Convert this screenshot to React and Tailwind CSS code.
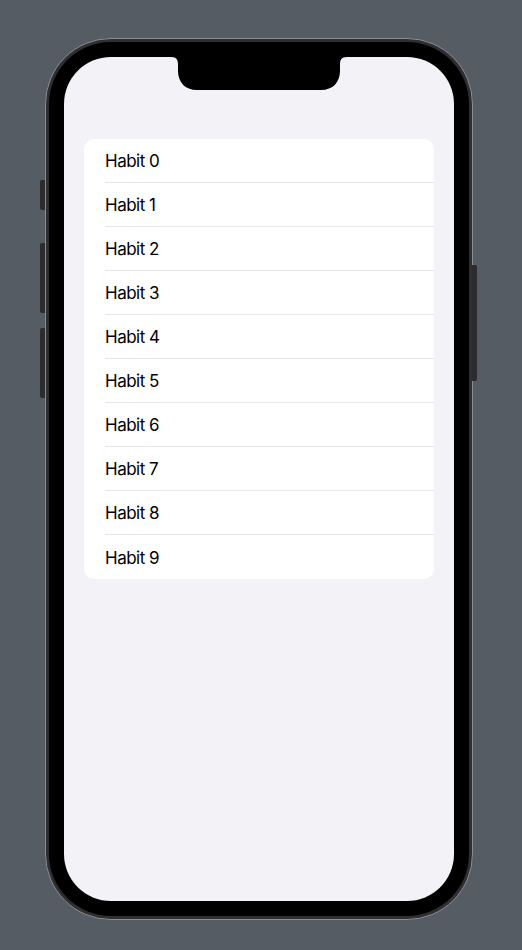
import React from 'react';

const habits = Array.from({ length: 10 }, (_, i) => `Habit ${i}`);

const Notch = () => (
  <svg
    className="absolute left-1/2 top-0 -translate-x-1/2"
    width="176"
    height="34"
    viewBox="0 0 176 34"
  >
    <path
      d="M0 0 H176 C170 0 169 3 169 8 V14 C169 25 162 33 150 33 H26 C14 33 7 25 7 14 V8 C7 3 6 0 0 0 Z"
      fill="#000"
    />
  </svg>
);

const App = () => {
  return (
    <div
      className="flex h-[950px] w-full justify-center bg-[#555c64] pt-[38px]"
      style={{ fontFamily: 'Inter, "Noto Sans", sans-serif' }}
    >
      {/* Phone frame */}
      <div className="relative ml-[-4px] h-[882px] w-[428px]">
        {/* side buttons */}
        <div className="absolute left-[-5px] top-[142px] h-[30px] w-[5px] rounded-l-[2px] bg-[#2c2c2e]" />
        <div className="absolute left-[-5px] top-[205px] h-[70px] w-[5px] rounded-l-[2px] bg-[#2c2c2e]" />
        <div className="absolute left-[-5px] top-[290px] h-[70px] w-[5px] rounded-l-[2px] bg-[#2c2c2e]" />
        <div className="absolute right-[-4px] top-[227px] h-[116px] w-[5px] rounded-r-[2px] bg-[#2c2c2e]" />

        <div className="h-full w-full rounded-[66px] border border-[#8a8d91] bg-[#2f2f31] p-[3px]">
          <div className="h-full w-full rounded-[62px] bg-black p-[15px]">
            {/* Screen */}
            <div className="relative h-[844px] w-[390px] overflow-hidden rounded-[47px] bg-[#f2f2f7]">
              <Notch />
              <div className="px-5 pt-[82px]">
                <div className="overflow-hidden rounded-[10px] bg-white">
                  {habits.map((h, i) => (
                    <div key={h} className="pl-[21px]">
                      <div
                        className={`flex h-[44px] items-center pt-[3px] text-[17px] tracking-[-0.5px] text-black ${
                          i < habits.length - 1 ? 'border-b border-[#e6e6ea]' : ''
                        }`}
                      >
                        {h}
                      </div>
                    </div>
                  ))}
                </div>
              </div>
            </div>
          </div>
        </div>
      </div>
    </div>
  );
};

export default App;
